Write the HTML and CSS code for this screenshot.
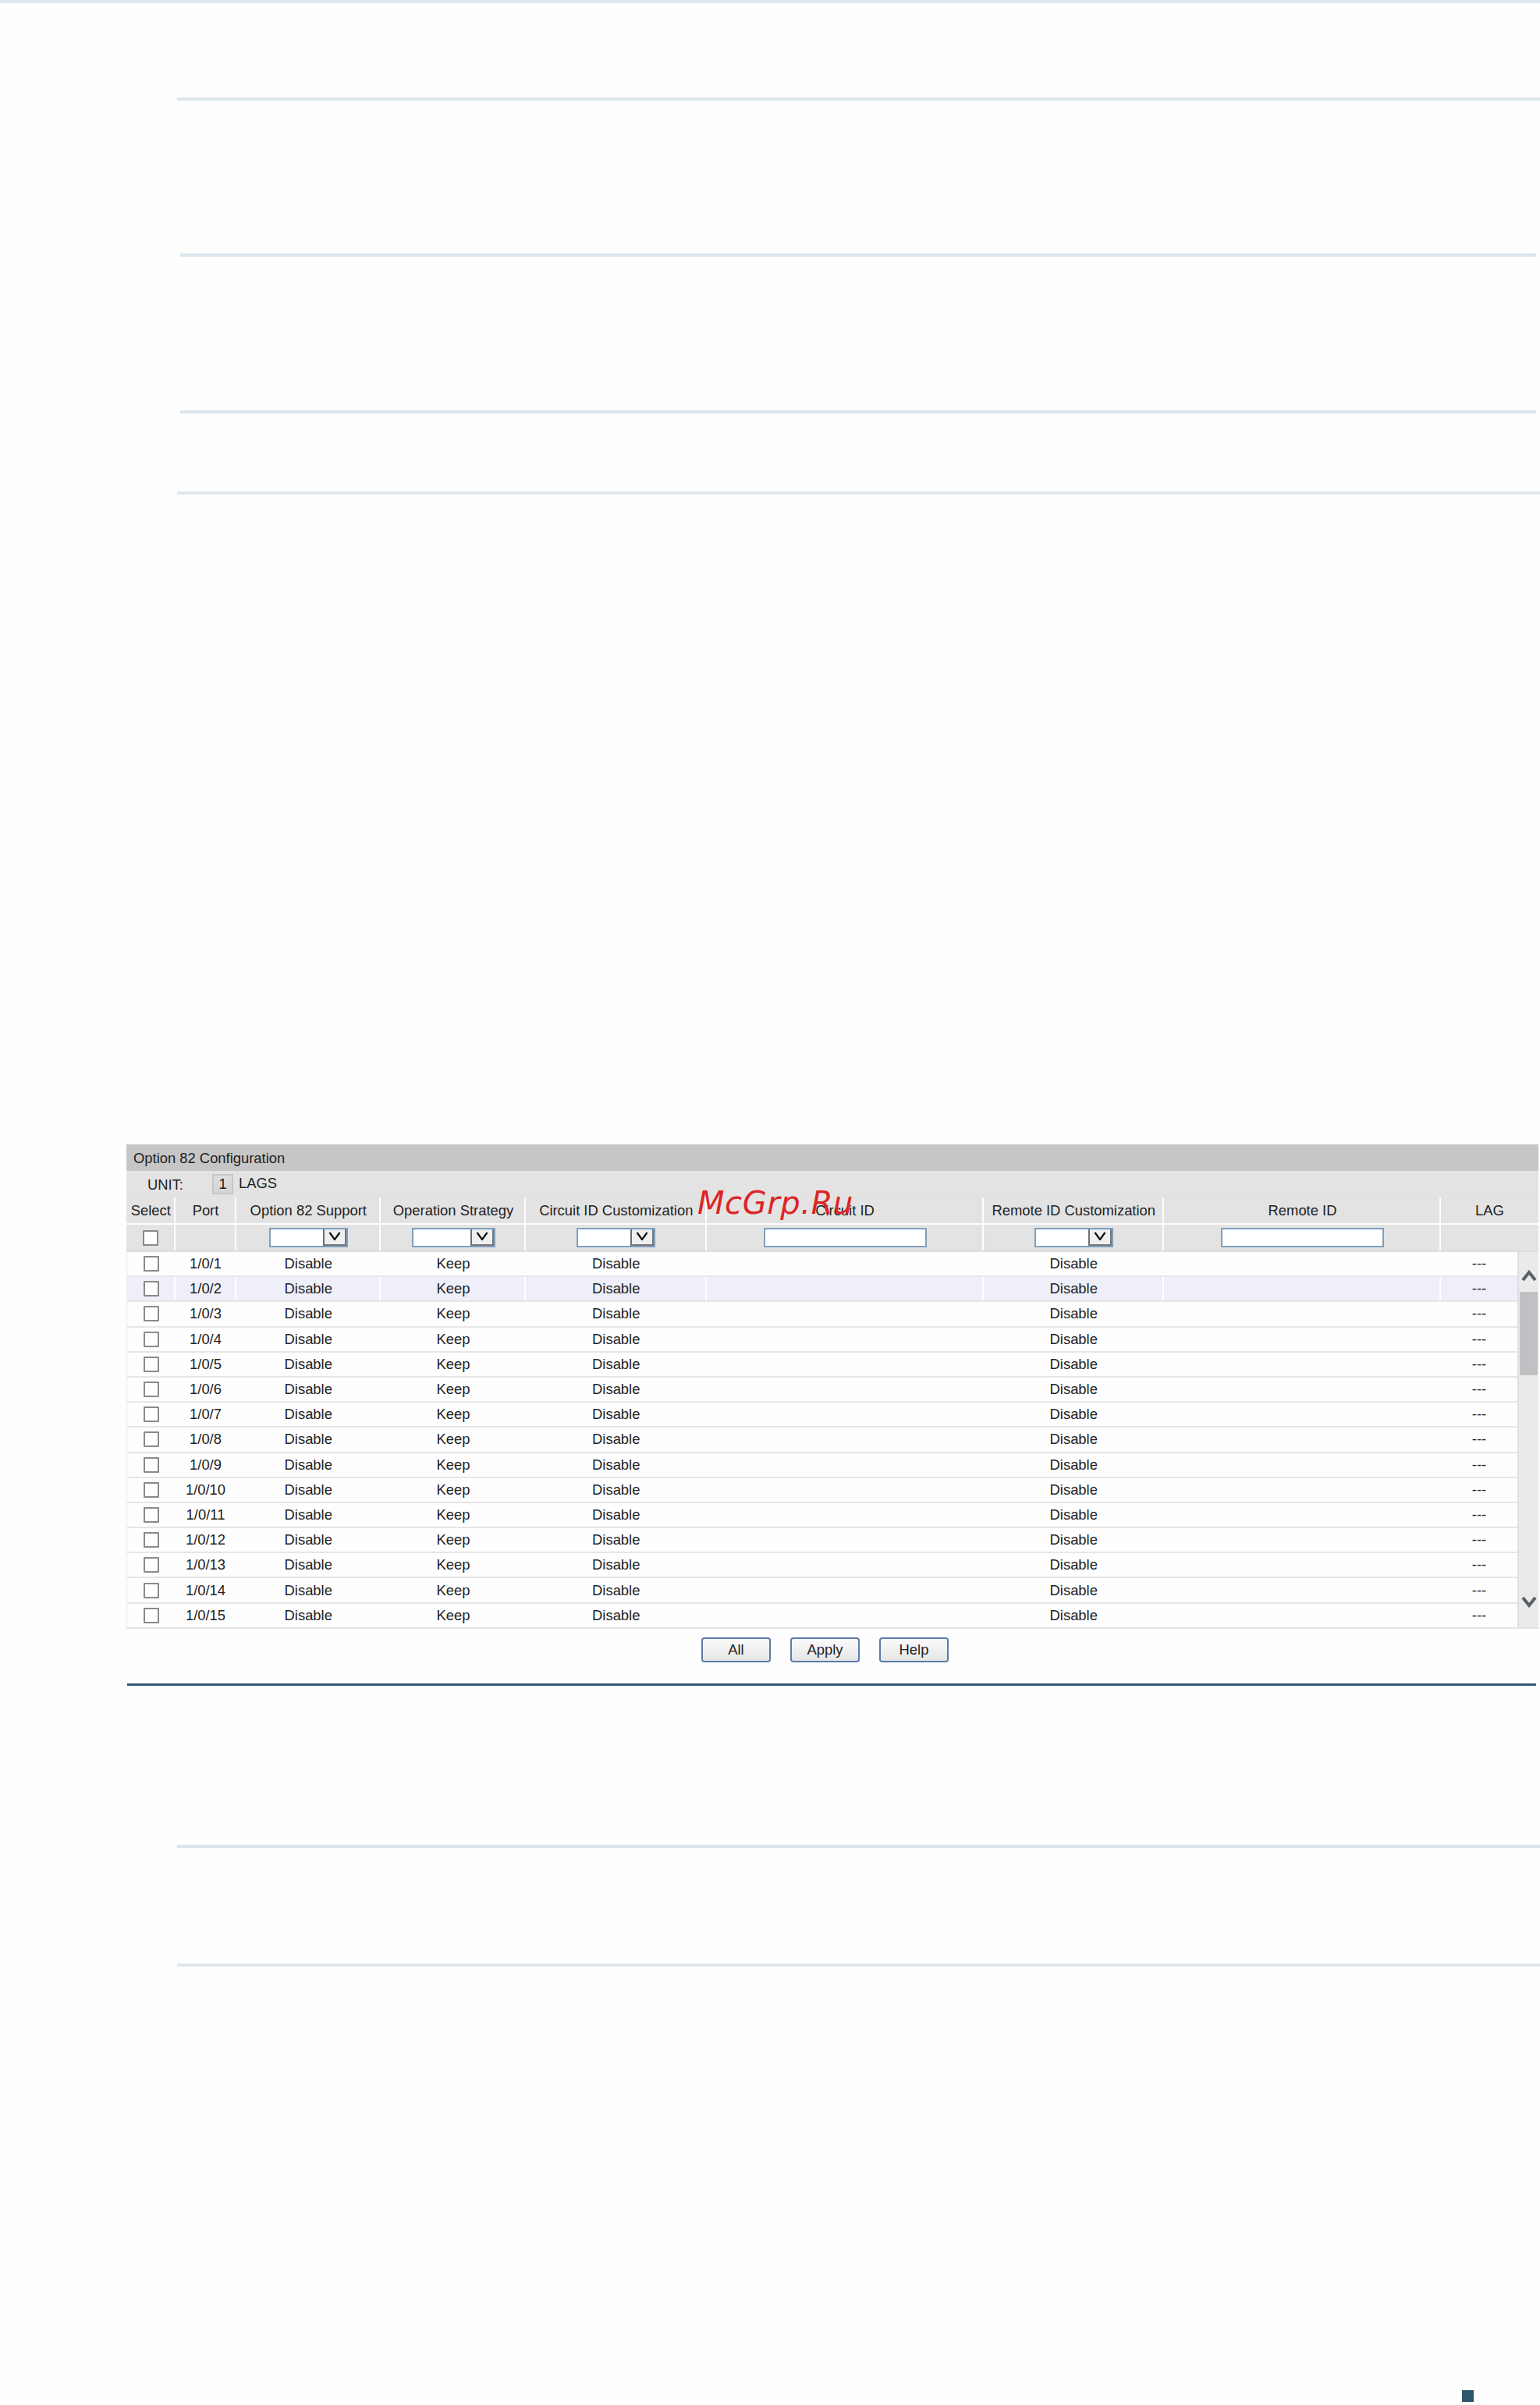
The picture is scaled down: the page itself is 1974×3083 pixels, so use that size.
FILE: index.html
```html
<!DOCTYPE html>
<html lang="en">
<head>
<meta charset="utf-8">
<title>Option 82 Configuration</title>
<link rel="stylesheet" href="styles.css">
</head>
<body>
<div class="page">
  <div class="rule rule-top"></div>
  <div class="rule rule-a"></div>
  <div class="rule rule-b"></div>
  <div class="rule rule-c"></div>
  <div class="rule rule-d"></div>

  <section class="panel">
    <div class="panel-title">Option 82 Configuration</div>
    <div class="unit-row">
      <span class="unit-label">UNIT:</span>
      <span class="unit-btn">1</span>
      <span class="unit-lags">LAGS</span>
    </div>
    <div class="cols head-row">
      <div class="cell">Select</div>
      <div class="cell">Port</div>
      <div class="cell">Option 82 Support</div>
      <div class="cell">Operation Strategy</div>
      <div class="cell">Circuit ID Customization</div>
      <div class="cell">Circuit ID</div>
      <div class="cell">Remote ID Customization</div>
      <div class="cell">Remote ID</div>
      <div class="cell">LAG</div>
    </div>
    <div class="cols filter-row">
      <div class="cell"><span class="check"></span></div>
      <div class="cell"></div>
      <div class="cell"><span class="select"><span class="select-arrow"><svg width="16" height="11" viewBox="0 0 16 11"><path d="M1.5 1l6.5 9 6.5-9" class="chev"/></svg></span></span></div>
      <div class="cell"><span class="select select-wide"><span class="select-arrow"><svg width="16" height="11" viewBox="0 0 16 11"><path d="M1.5 1l6.5 9 6.5-9" class="chev"/></svg></span></span></div>
      <div class="cell"><span class="select"><span class="select-arrow"><svg width="16" height="11" viewBox="0 0 16 11"><path d="M1.5 1l6.5 9 6.5-9" class="chev"/></svg></span></span></div>
      <div class="cell"><span class="field"></span></div>
      <div class="cell"><span class="select"><span class="select-arrow"><svg width="16" height="11" viewBox="0 0 16 11"><path d="M1.5 1l6.5 9 6.5-9" class="chev"/></svg></span></span></div>
      <div class="cell"><span class="field"></span></div>
      <div class="cell"></div>
    </div>
    <div class="list">
      <div class="rows">
        <div class="cols row"><div class="cell"><span class="check"></span></div><div class="cell">1/0/1</div><div class="cell">Disable</div><div class="cell">Keep</div><div class="cell">Disable</div><div class="cell"></div><div class="cell">Disable</div><div class="cell"></div><div class="cell">---</div></div>
        <div class="cols row row-hover"><div class="cell"><span class="check"></span></div><div class="cell">1/0/2</div><div class="cell">Disable</div><div class="cell">Keep</div><div class="cell">Disable</div><div class="cell"></div><div class="cell">Disable</div><div class="cell"></div><div class="cell">---</div></div>
        <div class="cols row"><div class="cell"><span class="check"></span></div><div class="cell">1/0/3</div><div class="cell">Disable</div><div class="cell">Keep</div><div class="cell">Disable</div><div class="cell"></div><div class="cell">Disable</div><div class="cell"></div><div class="cell">---</div></div>
        <div class="cols row"><div class="cell"><span class="check"></span></div><div class="cell">1/0/4</div><div class="cell">Disable</div><div class="cell">Keep</div><div class="cell">Disable</div><div class="cell"></div><div class="cell">Disable</div><div class="cell"></div><div class="cell">---</div></div>
        <div class="cols row"><div class="cell"><span class="check"></span></div><div class="cell">1/0/5</div><div class="cell">Disable</div><div class="cell">Keep</div><div class="cell">Disable</div><div class="cell"></div><div class="cell">Disable</div><div class="cell"></div><div class="cell">---</div></div>
        <div class="cols row"><div class="cell"><span class="check"></span></div><div class="cell">1/0/6</div><div class="cell">Disable</div><div class="cell">Keep</div><div class="cell">Disable</div><div class="cell"></div><div class="cell">Disable</div><div class="cell"></div><div class="cell">---</div></div>
        <div class="cols row"><div class="cell"><span class="check"></span></div><div class="cell">1/0/7</div><div class="cell">Disable</div><div class="cell">Keep</div><div class="cell">Disable</div><div class="cell"></div><div class="cell">Disable</div><div class="cell"></div><div class="cell">---</div></div>
        <div class="cols row"><div class="cell"><span class="check"></span></div><div class="cell">1/0/8</div><div class="cell">Disable</div><div class="cell">Keep</div><div class="cell">Disable</div><div class="cell"></div><div class="cell">Disable</div><div class="cell"></div><div class="cell">---</div></div>
        <div class="cols row"><div class="cell"><span class="check"></span></div><div class="cell">1/0/9</div><div class="cell">Disable</div><div class="cell">Keep</div><div class="cell">Disable</div><div class="cell"></div><div class="cell">Disable</div><div class="cell"></div><div class="cell">---</div></div>
        <div class="cols row"><div class="cell"><span class="check"></span></div><div class="cell">1/0/10</div><div class="cell">Disable</div><div class="cell">Keep</div><div class="cell">Disable</div><div class="cell"></div><div class="cell">Disable</div><div class="cell"></div><div class="cell">---</div></div>
        <div class="cols row"><div class="cell"><span class="check"></span></div><div class="cell">1/0/11</div><div class="cell">Disable</div><div class="cell">Keep</div><div class="cell">Disable</div><div class="cell"></div><div class="cell">Disable</div><div class="cell"></div><div class="cell">---</div></div>
        <div class="cols row"><div class="cell"><span class="check"></span></div><div class="cell">1/0/12</div><div class="cell">Disable</div><div class="cell">Keep</div><div class="cell">Disable</div><div class="cell"></div><div class="cell">Disable</div><div class="cell"></div><div class="cell">---</div></div>
        <div class="cols row"><div class="cell"><span class="check"></span></div><div class="cell">1/0/13</div><div class="cell">Disable</div><div class="cell">Keep</div><div class="cell">Disable</div><div class="cell"></div><div class="cell">Disable</div><div class="cell"></div><div class="cell">---</div></div>
        <div class="cols row"><div class="cell"><span class="check"></span></div><div class="cell">1/0/14</div><div class="cell">Disable</div><div class="cell">Keep</div><div class="cell">Disable</div><div class="cell"></div><div class="cell">Disable</div><div class="cell"></div><div class="cell">---</div></div>
        <div class="cols row"><div class="cell"><span class="check"></span></div><div class="cell">1/0/15</div><div class="cell">Disable</div><div class="cell">Keep</div><div class="cell">Disable</div><div class="cell"></div><div class="cell">Disable</div><div class="cell"></div><div class="cell">---</div></div>
      </div>
      <div class="scroll">
        <svg class="scroll-up" width="20" height="15" viewBox="0 0 20 15"><path d="M2 13l8-10 8 10" class="scroll-chev"/></svg>
        <div class="scroll-thumb"></div>
        <svg class="scroll-down" width="20" height="15" viewBox="0 0 20 15"><path d="M2 2l8 10 8-10" class="scroll-chev"/></svg>
      </div>
    </div>
    <div class="actions">
      <span class="btn">All</span>
      <span class="btn">Apply</span>
      <span class="btn">Help</span>
    </div>
    <div class="watermark">McGrp.Ru</div>
  </section>

  <div class="rule-dark"></div>
  <div class="rule rule-e"></div>
  <div class="rule rule-f"></div>
  <div class="page-mark"></div>
</div>
</body>
</html>
```
FILE: styles.css
```css
* { box-sizing: border-box; }
html, body { margin: 0; padding: 0; background: #fefefe; }
.page {
  display: flex;
  flex-direction: column;
  height: 3083px;
  overflow: hidden;
  font-family: "Liberation Sans", Arial, sans-serif;
  font-size: 18.4px;
  color: #222;
}
.rule { height: 4px; background: #dce6eb; flex: none; }
.rule-top { width: 100%; }
.rule-a { margin: 121px 0 0 227px; }
.rule-b { margin: 196px 5px 0 231px; }
.rule-c { margin: 197px 5px 0 231px; }
.rule-d { margin: 100px 0 0 227px; }
.rule-e { margin: 204px 0 0 227px; }
.rule-f { margin: 148px 0 0 227px; }

.panel {
  position: relative;
  flex: none;
  width: 1810px;
  margin: 833px 0 0 162px;
}
.panel-title {
  height: 34px;
  line-height: 35px;
  padding-left: 9px;
  background: #c6c6c6;
}
.unit-row {
  display: flex;
  align-items: center;
  height: 34px;
  background: #e3e3e3;
  border-bottom: 1px solid #e0e0e0;
}
.unit-label { width: 110px; padding-left: 27px; position: relative; top: 1px; }
.unit-btn {
  width: 27px;
  height: 26px;
  margin-right: 7px;
  line-height: 21px;
  text-align: center;
  background: linear-gradient(#dedede, #d4d4d4);
  border: 2px solid #c6c6c6;
}
.unit-lags { position: relative; top: -1px; }

.cols {
  display: grid;
  grid-template-columns: 62.5px 78px 185.5px 186px 231.5px 355px 231.5px 355px 1fr;
}
.cell {
  display: flex;
  align-items: center;
  justify-content: center;
  min-width: 0;
  white-space: nowrap;
  padding-left: 2px;
  border-right: 2px solid #fefefe;
}
.cell:last-child { padding-left: 0; border-right: 0; }
.head-row { height: 35px; background: #e3e3e3; border-bottom: 2px solid #fefefe; }
.filter-row { height: 35px; background: #e3e3e3; border-bottom: 2px solid #dedede; }

.check {
  display: block;
  width: 20px;
  height: 20px;
  background: #fff;
  border: 2px solid #8a8a8a;
  border-radius: 1px;
}
.select {
  display: flex;
  justify-content: flex-end;
  width: 101px;
  height: 25px;
  background: #fff;
  border: 2px solid #7f9fbd;
}
.select-wide { width: 107px; }
.select-arrow {
  display: flex;
  align-items: flex-start;
  justify-content: center;
  width: 30px;
  padding: 3px 2px 0 0;
  background: #efefef;
  border-left: 2px solid #6f6f6f;
  box-shadow: inset -2px -2px 0 #777;
}
.chev { fill: none; stroke: #111; stroke-width: 2.2; }
.field {
  display: block;
  width: 209px;
  height: 25px;
  background: #fff;
  border: 2px solid #7f9fbd;
}

.list {
  display: flex;
  height: 482.5px;
  border-left: 1px solid #ececec;
  border-bottom: 2px solid #e3e3e3;
}
.rows { flex: 1; min-width: 0; }
.row {
  height: 32.2px;
  grid-template-columns: 61.5px 78px 185.5px 186px 231.5px 355px 231.5px 355px 1fr;
  border-bottom: 2px solid #e6e6e6;
  background: #fefefe;
}
.row:last-child { height: 30.5px; border-bottom: 0; }
.row-hover { background: #eeeff9; }
.scroll {
  display: flex;
  flex-direction: column;
  align-items: center;
  flex: none;
  width: 27px;
  background: #eaeaea;
  border-left: 2px solid #dedede;
}
.scroll-up { margin-top: 23px; flex: none; }
.scroll-thumb { width: 23px; height: 107px; margin-top: 13px; background: #bfc1c3; flex: none; }
.scroll-down { margin-top: auto; margin-bottom: 25px; flex: none; }
.scroll-chev { fill: none; stroke: #56606a; stroke-width: 4; }

.actions {
  display: flex;
  gap: 25px;
  padding: 11px 0 0 737px;
  height: 70.5px;
}
.btn {
  width: 89px;
  height: 32px;
  line-height: 28px;
  text-align: center;
  background: linear-gradient(#fafafa, #e6e6e6);
  border: 2px solid #5b7ba8;
  border-radius: 4px;
}
.watermark {
  position: absolute;
  left: 732px;
  top: 52px;
  font-family: "DejaVu Sans", sans-serif;
  font-style: italic;
  font-size: 40px;
  line-height: 46px;
  letter-spacing: 0.6px;
  color: #dd2424;
}

.rule-dark {
  flex: none;
  height: 3px;
  margin: 0 5px 0 163px;
  background: #2f5b72;
}
.page-mark {
  flex: none;
  width: 15px;
  height: 15px;
  margin: auto 0 4px 1874px;
  background: #2c566b;
}
```
